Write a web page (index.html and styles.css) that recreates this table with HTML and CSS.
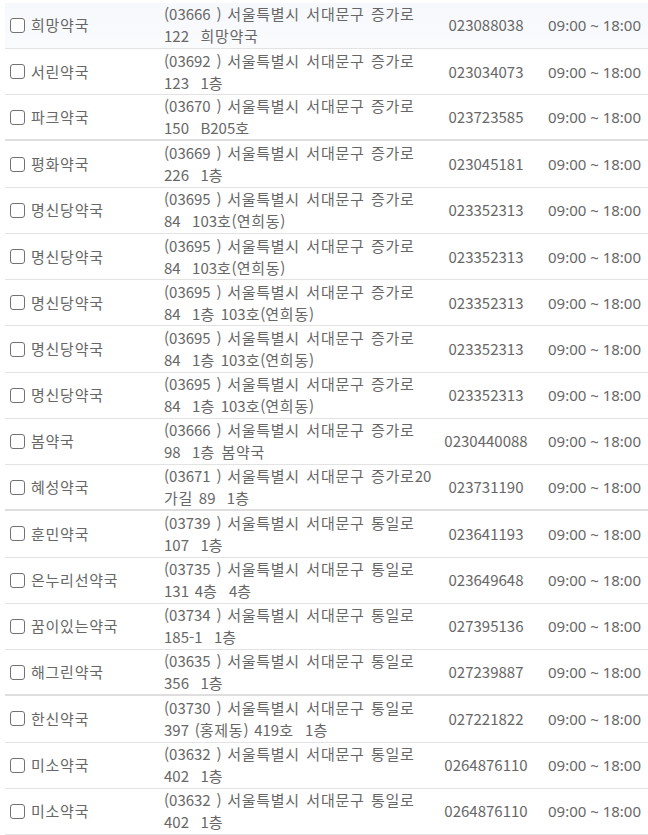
FILE: index.html
```html
<!DOCTYPE html>
<html lang="ko">
<head>
<meta charset="utf-8">
<link rel="stylesheet" href="styles.css">
</head>
<body>
<div class="list">
  <div class="row hover">
    <label class="name"><span class="box"></span>희망약국</label>
    <div class="addr"><span>(03666 ) <i>서울특별시 서대문구 증가로</i></span><span>122  <i>희망약국</i></span></div>
    <div class="tel">023088038</div>
    <div class="hours">09:00 ~ 18:00</div>
  </div>
  <div class="row">
    <label class="name"><span class="box"></span>서린약국</label>
    <div class="addr"><span>(03692 ) <i>서울특별시 서대문구 증가로</i></span><span>123  1<i>층</i></span></div>
    <div class="tel">023034073</div>
    <div class="hours">09:00 ~ 18:00</div>
  </div>
  <div class="row thick">
    <label class="name"><span class="box"></span>파크약국</label>
    <div class="addr"><span>(03670 ) <i>서울특별시 서대문구 증가로</i></span><span>150  B205<i>호</i></span></div>
    <div class="tel">023723585</div>
    <div class="hours">09:00 ~ 18:00</div>
  </div>
  <div class="row">
    <label class="name"><span class="box"></span>평화약국</label>
    <div class="addr"><span>(03669 ) <i>서울특별시 서대문구 증가로</i></span><span>226  1<i>층</i></span></div>
    <div class="tel">023045181</div>
    <div class="hours">09:00 ~ 18:00</div>
  </div>
  <div class="row">
    <label class="name"><span class="box"></span>명신당약국</label>
    <div class="addr"><span>(03695 ) <i>서울특별시 서대문구 증가로</i></span><span>84  103<i>호</i>(<i>연희동</i>)</span></div>
    <div class="tel">023352313</div>
    <div class="hours">09:00 ~ 18:00</div>
  </div>
  <div class="row">
    <label class="name"><span class="box"></span>명신당약국</label>
    <div class="addr"><span>(03695 ) <i>서울특별시 서대문구 증가로</i></span><span>84  103<i>호</i>(<i>연희동</i>)</span></div>
    <div class="tel">023352313</div>
    <div class="hours">09:00 ~ 18:00</div>
  </div>
  <div class="row">
    <label class="name"><span class="box"></span>명신당약국</label>
    <div class="addr"><span>(03695 ) <i>서울특별시 서대문구 증가로</i></span><span>84  1<i>층</i> 103<i>호</i>(<i>연희동</i>)</span></div>
    <div class="tel">023352313</div>
    <div class="hours">09:00 ~ 18:00</div>
  </div>
  <div class="row">
    <label class="name"><span class="box"></span>명신당약국</label>
    <div class="addr"><span>(03695 ) <i>서울특별시 서대문구 증가로</i></span><span>84  1<i>층</i> 103<i>호</i>(<i>연희동</i>)</span></div>
    <div class="tel">023352313</div>
    <div class="hours">09:00 ~ 18:00</div>
  </div>
  <div class="row">
    <label class="name"><span class="box"></span>명신당약국</label>
    <div class="addr"><span>(03695 ) <i>서울특별시 서대문구 증가로</i></span><span>84  1<i>층</i> 103<i>호</i>(<i>연희동</i>)</span></div>
    <div class="tel">023352313</div>
    <div class="hours">09:00 ~ 18:00</div>
  </div>
  <div class="row">
    <label class="name"><span class="box"></span>봄약국</label>
    <div class="addr"><span>(03666 ) <i>서울특별시 서대문구 증가로</i></span><span>98  1<i>층 봄약국</i></span></div>
    <div class="tel">0230440088</div>
    <div class="hours">09:00 ~ 18:00</div>
  </div>
  <div class="row thick">
    <label class="name"><span class="box"></span>혜성약국</label>
    <div class="addr"><span>(03671 ) <i>서울특별시 서대문구 증가로</i>20</span><span><i>가길</i> 89  1<i>층</i></span></div>
    <div class="tel">023731190</div>
    <div class="hours">09:00 ~ 18:00</div>
  </div>
  <div class="row">
    <label class="name"><span class="box"></span>훈민약국</label>
    <div class="addr"><span>(03739 ) <i>서울특별시 서대문구 통일로</i></span><span>107  1<i>층</i></span></div>
    <div class="tel">023641193</div>
    <div class="hours">09:00 ~ 18:00</div>
  </div>
  <div class="row">
    <label class="name"><span class="box"></span>온누리선약국</label>
    <div class="addr"><span>(03735 ) <i>서울특별시 서대문구 통일로</i></span><span>131 4<i>층</i>  4<i>층</i></span></div>
    <div class="tel">023649648</div>
    <div class="hours">09:00 ~ 18:00</div>
  </div>
  <div class="row">
    <label class="name"><span class="box"></span>꿈이있는약국</label>
    <div class="addr"><span>(03734 ) <i>서울특별시 서대문구 통일로</i></span><span>185-1  1<i>층</i></span></div>
    <div class="tel">027395136</div>
    <div class="hours">09:00 ~ 18:00</div>
  </div>
  <div class="row thick">
    <label class="name"><span class="box"></span>해그린약국</label>
    <div class="addr"><span>(03635 ) <i>서울특별시 서대문구 통일로</i></span><span>356  1<i>층</i></span></div>
    <div class="tel">027239887</div>
    <div class="hours">09:00 ~ 18:00</div>
  </div>
  <div class="row">
    <label class="name"><span class="box"></span>한신약국</label>
    <div class="addr"><span>(03730 ) <i>서울특별시 서대문구 통일로</i></span><span>397 (<i>홍제동</i>) 419<i>호</i>  1<i>층</i></span></div>
    <div class="tel">027221822</div>
    <div class="hours">09:00 ~ 18:00</div>
  </div>
  <div class="row">
    <label class="name"><span class="box"></span>미소약국</label>
    <div class="addr"><span>(03632 ) <i>서울특별시 서대문구 통일로</i></span><span>402  1<i>층</i></span></div>
    <div class="tel">0264876110</div>
    <div class="hours">09:00 ~ 18:00</div>
  </div>
  <div class="row">
    <label class="name"><span class="box"></span>미소약국</label>
    <div class="addr"><span>(03632 ) <i>서울특별시 서대문구 통일로</i></span><span>402  1<i>층</i></span></div>
    <div class="tel">0264876110</div>
    <div class="hours">09:00 ~ 18:00</div>
  </div>
</div>
</body>
</html>
```
FILE: styles.css
```css
html, body {
  margin: 0;
  padding: 0;
  background: #ffffff;
  overflow: hidden;
}
body {
  font-family: "Noto Sans CJK KR", "Noto Sans", sans-serif;
  font-size: 15px;
  color: #676767;
}
.list {
  margin: 2.76px 0 0 5px;
  width: 652px;
}
.row {
  display: grid;
  grid-template-columns: 159px 276px 92px 125px;
  align-items: center;
  box-sizing: border-box;
  height: 46.24px;
  border-bottom: 1px solid #e3e3e3;
}
.row.thick {
  border-bottom: 2px solid #dedede;
}
.row.hover {
  background: linear-gradient(#f6f8fc, #fafbfd);
}
.name {
  display: flex;
  align-items: center;
  padding-left: 5px;
  line-height: 22px;
  letter-spacing: 0.75px;
}
.box {
  box-sizing: border-box;
  width: 15px;
  height: 15px;
  border: 1.5px solid #727272;
  border-radius: 3px;
  margin-right: 6px;
  background: #fff;
  flex: none;
}
.addr {
  display: flex;
  flex-direction: column;
  line-height: 22px;
  white-space: pre;
  word-spacing: 1.5px;
}
.addr i {
  font-style: normal;
  letter-spacing: 0.75px;
}
.tel {
  text-align: center;
  line-height: 22px;
}
.hours {
  text-align: center;
  line-height: 22px;
  font-family: "Noto Sans", sans-serif;
  font-size: 15px;
}
```
